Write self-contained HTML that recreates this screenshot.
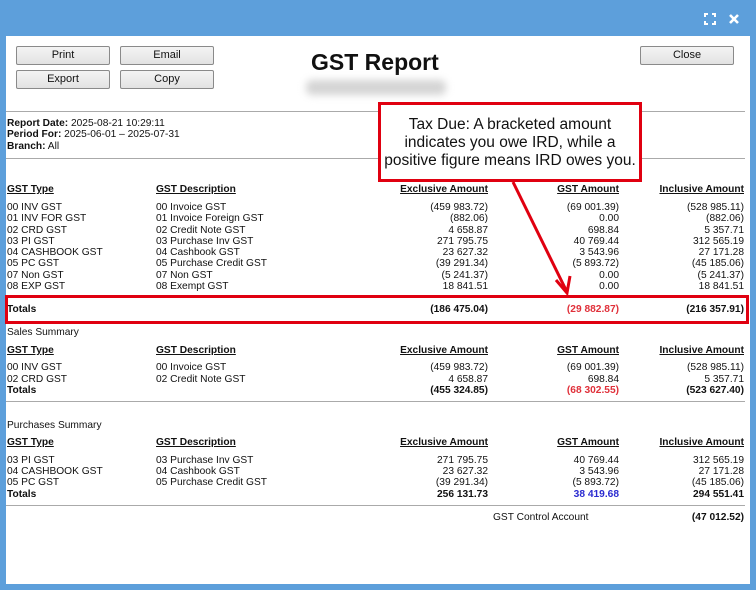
<!DOCTYPE html>
<html><head><meta charset="utf-8"><style>
*{margin:0;padding:0;box-sizing:border-box}
body{width:756px;height:590px;background:#5d9fdb;position:relative;overflow:hidden;font-family:"Liberation Sans",Arial,sans-serif;font-size:10.2px;color:#111}
#p{position:absolute;left:6px;top:36px;width:744px;height:548px;background:#fff}
.a{position:absolute;white-space:nowrap;line-height:12px}
.btn{position:absolute;height:19px;border:1px solid #8a8a8a;border-radius:2px;background:linear-gradient(#f4f4f4,#e2e2e2);text-align:center;line-height:17px;font-size:11px}
.hr{position:absolute;left:6px;width:739px;height:1px;background:#aaa}
.r{position:absolute;left:0;width:756px;height:12px}
.r span{position:absolute;white-space:nowrap;line-height:12px}
.c1{left:7px}.c2{left:156px}.c3{right:268px}.c4{right:137px}.c5{right:12px}
.h span{font-weight:bold;text-decoration:underline}
.b span{font-weight:bold}
</style></head><body>
<div id="p"></div>
<svg style="position:absolute;left:703px;top:12px" width="40" height="14"><g stroke="#fff" stroke-width="2" fill="none"><path d="M2 5V2h3M9 2h3v3M12 9v3H9M5 12H2V9"/><path d="M27 3l8 8M35 3l-8 8" stroke-width="2.6"/></g></svg>
<div class="btn" style="left:16px;top:46px;width:94px">Print</div>
<div class="btn" style="left:120px;top:46px;width:94px">Email</div>
<div class="btn" style="left:16px;top:70px;width:94px">Export</div>
<div class="btn" style="left:120px;top:70px;width:94px">Copy</div>
<div class="btn" style="left:640px;top:46px;width:94px">Close</div>
<div class="a" style="left:311px;top:49px;font-size:23px;font-weight:bold;line-height:26px">GST Report</div>
<div style="position:absolute;left:306px;top:80px;width:140px;height:15px;background:#d4d4d4;filter:blur(4px);border-radius:6px"></div>
<div class="hr" style="top:111px"></div>
<div class="a" style="left:7px;top:118px"><b>Report Date:</b> 2025-08-21 10:29:11</div>
<div class="a" style="left:7px;top:129px"><b>Period For:</b> 2025-06-01 – 2025-07-31</div>
<div class="a" style="left:7px;top:141px"><b>Branch:</b> All</div>
<div class="hr" style="top:158px"></div>

<div class="r h" style="top:184px"><span class="c1">GST Type</span><span class="c2">GST Description</span><span class="c3">Exclusive Amount</span><span class="c4">GST Amount</span><span class="c5">Inclusive Amount</span></div>
<div class="r" style="top:202px"><span class="c1">00 INV GST</span><span class="c2">00 Invoice GST</span><span class="c3">(459 983.72)</span><span class="c4">(69 001.39)</span><span class="c5">(528 985.11)</span></div>
<div class="r" style="top:213px"><span class="c1">01 INV FOR GST</span><span class="c2">01 Invoice Foreign GST</span><span class="c3">(882.06)</span><span class="c4">0.00</span><span class="c5">(882.06)</span></div>
<div class="r" style="top:224.5px"><span class="c1">02 CRD GST</span><span class="c2">02 Credit Note GST</span><span class="c3">4 658.87</span><span class="c4">698.84</span><span class="c5">5 357.71</span></div>
<div class="r" style="top:235.5px"><span class="c1">03 PI GST</span><span class="c2">03 Purchase Inv GST</span><span class="c3">271 795.75</span><span class="c4">40 769.44</span><span class="c5">312 565.19</span></div>
<div class="r" style="top:247px"><span class="c1">04 CASHBOOK GST</span><span class="c2">04 Cashbook GST</span><span class="c3">23 627.32</span><span class="c4">3 543.96</span><span class="c5">27 171.28</span></div>
<div class="r" style="top:258px"><span class="c1">05 PC GST</span><span class="c2">05 Purchase Credit GST</span><span class="c3">(39 291.34)</span><span class="c4">(5 893.72)</span><span class="c5">(45 185.06)</span></div>
<div class="r" style="top:269.5px"><span class="c1">07 Non GST</span><span class="c2">07 Non GST</span><span class="c3">(5 241.37)</span><span class="c4">0.00</span><span class="c5">(5 241.37)</span></div>
<div class="r" style="top:281px"><span class="c1">08 EXP GST</span><span class="c2">08 Exempt GST</span><span class="c3">18 841.51</span><span class="c4">0.00</span><span class="c5">18 841.51</span></div>
<div class="r b" style="top:304px"><span class="c1">Totals</span><span class="c3">(186 475.04)</span><span class="c4" style="color:#e0303a">(29 882.87)</span><span class="c5">(216 357.91)</span></div>
<div style="position:absolute;left:5px;top:295px;width:744px;height:29px;border:3px solid #e00010"></div>

<div class="a" style="left:7px;top:327px">Sales Summary</div>
<div class="r h" style="top:345px"><span class="c1">GST Type</span><span class="c2">GST Description</span><span class="c3">Exclusive Amount</span><span class="c4">GST Amount</span><span class="c5">Inclusive Amount</span></div>
<div class="r" style="top:362px"><span class="c1">00 INV GST</span><span class="c2">00 Invoice GST</span><span class="c3">(459 983.72)</span><span class="c4">(69 001.39)</span><span class="c5">(528 985.11)</span></div>
<div class="r" style="top:373.5px"><span class="c1">02 CRD GST</span><span class="c2">02 Credit Note GST</span><span class="c3">4 658.87</span><span class="c4">698.84</span><span class="c5">5 357.71</span></div>
<div class="r b" style="top:385px"><span class="c1">Totals</span><span class="c3">(455 324.85)</span><span class="c4" style="color:#e0303a">(68 302.55)</span><span class="c5">(523 627.40)</span></div>
<div class="hr" style="top:401px"></div>

<div class="a" style="left:7px;top:420px">Purchases Summary</div>
<div class="r h" style="top:437px"><span class="c1">GST Type</span><span class="c2">GST Description</span><span class="c3">Exclusive Amount</span><span class="c4">GST Amount</span><span class="c5">Inclusive Amount</span></div>
<div class="r" style="top:454.5px"><span class="c1">03 PI GST</span><span class="c2">03 Purchase Inv GST</span><span class="c3">271 795.75</span><span class="c4">40 769.44</span><span class="c5">312 565.19</span></div>
<div class="r" style="top:466px"><span class="c1">04 CASHBOOK GST</span><span class="c2">04 Cashbook GST</span><span class="c3">23 627.32</span><span class="c4">3 543.96</span><span class="c5">27 171.28</span></div>
<div class="r" style="top:477px"><span class="c1">05 PC GST</span><span class="c2">05 Purchase Credit GST</span><span class="c3">(39 291.34)</span><span class="c4">(5 893.72)</span><span class="c5">(45 185.06)</span></div>
<div class="r b" style="top:488.5px"><span class="c1">Totals</span><span class="c3">256 131.73</span><span class="c4" style="color:#2a2ad0">38 419.68</span><span class="c5">294 551.41</span></div>
<div class="hr" style="top:505px"></div>
<div class="r" style="top:512px"><span style="left:493px">GST Control Account</span><span class="c5" style="font-weight:bold">(47 012.52)</span></div>

<svg style="position:absolute;left:0;top:0" width="756" height="590"><g stroke="#e00010" stroke-width="3" fill="none"><path d="M513 182L566 290"/><path d="M556 280L567 293L570 276"/></g></svg>
<div style="position:absolute;left:378px;top:102px;width:264px;height:80px;border:3px solid #e00010;background:#fff;text-align:center;font-size:15.5px;line-height:18px;padding-top:11px;color:#111">Tax Due: A bracketed amount<br>indicates you owe IRD, while a<br>positive figure means IRD owes you.</div>
</body></html>
